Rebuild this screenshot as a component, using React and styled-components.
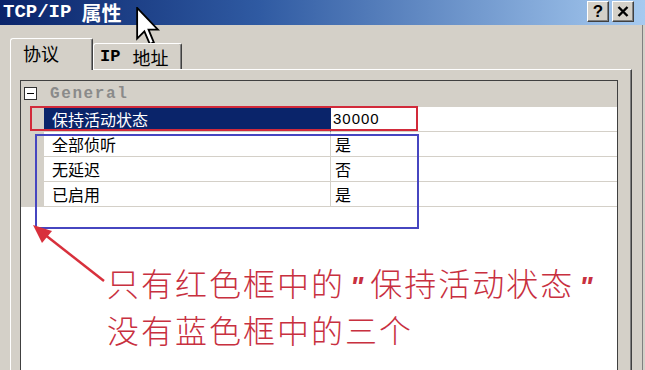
import React from 'react'
import styled, { createGlobalStyle } from 'styled-components'

const GlobalStyle = createGlobalStyle`
  html, body {
    margin: 0;
    padding: 0;
    background: #d4d0c8;
    overflow: hidden;
  }
  body {
    font-family: "Noto Sans CJK SC", "Liberation Sans", sans-serif;
  }
`

const Window = styled.div`
  position: relative;
  width: 645px;
  height: 370px;
  overflow: hidden;
  background: #d4d0c8;
  display: flex;
  flex-direction: column;
`

const TitleBar = styled.div`
  flex: none;
  height: 25px;
  display: flex;
  align-items: center;
  justify-content: space-between;
  padding: 0 11px 0 3px;
  background: linear-gradient(to right, #0a246a 0%, #2f5aa2 40%, #a6caf0 100%);
`

const Title = styled.div`
  display: flex;
  align-items: center;
  gap: 10px;
  color: #fff;
  font-weight: bold;
  font-size: 20px;
  line-height: 1;
`

const Mono = styled.span`
  font-family: "Liberation Mono", monospace;
  font-size: 19px;
`

const TitleButtons = styled.div`
  display: flex;
  gap: 3px;
  align-self: flex-start;
  margin-top: 1px;
`

const TitleButton = styled.div`
  width: 22px;
  height: 21px;
  box-sizing: border-box;
  background: #d4d0c8;
  border: 1px solid;
  border-color: #fff #404040 #404040 #fff;
  box-shadow: inset -1px -1px 0 #808080;
  display: flex;
  align-items: center;
  justify-content: center;
  font-family: "Liberation Sans", sans-serif;
  font-weight: bold;
  font-size: 17px;
  color: #000;
`

const Body = styled.div`
  flex: 1;
  min-height: 0;
  display: flex;
  flex-direction: column;
  padding: 13px 13px 0 10px;
  box-shadow: inset -2px 0 0 #d4d0c8, inset -3px 0 0 #808080;
`

const TabRow = styled.div`
  position: relative;
  z-index: 1;
  height: 31px;
  flex: none;
  display: flex;
  align-items: flex-end;
`

const Tab = styled.div`
  box-sizing: border-box;
  width: ${p => (p.$active ? '83px' : '89px')};
  height: ${p => (p.$active ? '32px' : '26px')};
  margin-bottom: ${p => (p.$active ? '-1px' : '0')};
  padding: ${p => (p.$active ? '0 0 3px 12px' : '0 0 0 6px')};
  background: #d4d0c8;
  border-top: 1px solid #fff;
  border-left: 1px solid #fff;
  border-right: 1px solid #404040;
  border-top-left-radius: 3px;
  border-top-right-radius: 2px;
  box-shadow: inset -1px 0 0 #808080;
  display: flex;
  align-items: center;
  font-size: 18px;
  color: #000;
`

const TabLatin = styled.span`
  font-family: "Liberation Mono", monospace;
  font-weight: bold;
  font-size: 17px;
  margin-right: 12px;
`

const Panel = styled.div`
  flex: 1;
  min-height: 0;
  display: flex;
  flex-direction: column;
  padding: 10px 13px 0 9px;
  border-top: 1px solid #fff;
  border-left: 1px solid #fff;
  border-right: 1px solid #404040;
  box-shadow: inset -1px 0 0 #808080;
`

const Grid = styled.div`
  flex: 1;
  display: flex;
  flex-direction: column;
  background: #fff;
  border: 1px solid #404040;
  border-bottom: none;
`

const GroupRow = styled.div`
  height: 26px;
  flex: none;
  display: flex;
  align-items: center;
  padding-left: 3px;
  background: #d4d0c8;
`

const ToggleBox = styled.div`
  position: relative;
  box-sizing: border-box;
  width: 13px;
  height: 13px;
  border: 1px solid #303030;
  background: #fff;
  margin-top: -2px;
  &::after {
    content: '';
    position: absolute;
    left: 2px;
    right: 2px;
    top: 5px;
    height: 1px;
    background: #000;
  }
`

const GroupLabel = styled.span`
  margin-left: 13px;
  font-family: "Liberation Mono", monospace;
  font-weight: bold;
  font-size: 16px;
  letter-spacing: 1.6px;
  color: #8a8a8a;
`

const PropRow = styled.div`
  flex: none;
  height: 25px;
  display: grid;
  grid-template-columns: 23px 287px 1fr;
`

const Gutter = styled.div`
  background: #d4d0c8;
`

const NameCell = styled.div`
  padding-left: 8px;
  background: ${p => (p.$selected ? '#0a246a' : '#fff')};
  color: ${p => (p.$selected ? '#fff' : '#000')};
  border-right: 1px solid ${p => (p.$selected ? '#0a246a' : '#d4d0c8')};
  border-bottom: 1px solid #d4d0c8;
  font-size: 16px;
  line-height: 24px;
  white-space: nowrap;
`

const ValueCell = styled.div`
  padding-left: ${p => (p.$number ? '2px' : '4px')};
  border-bottom: 1px solid #d4d0c8;
  font-family: ${p => (p.$number ? '"Liberation Sans", sans-serif' : 'inherit')};
  letter-spacing: ${p => (p.$number ? '1px' : '0')};
  font-size: ${p => (p.$number ? '15px' : '16px')};
  line-height: 24px;
  color: #000;
`

const Note = styled.div`
  padding: 54px 0 0 86px;
  font-size: 32px;
  font-weight: 300;
  line-height: 42px;
  letter-spacing: 2px;
  color: #c8303f;
  white-space: nowrap;
`

const Quote = styled.span`
  font-family: "Liberation Sans", sans-serif;
  font-style: italic;
  font-weight: bold;
  font-size: 28px;
  margin: 0 5px;
`

const Frame = styled.div`
  position: absolute;
  box-sizing: border-box;
  left: ${p => p.$x}px;
  top: ${p => p.$y}px;
  width: ${p => p.$w}px;
  height: ${p => p.$h}px;
  border: 2px solid ${p => p.$color};
  pointer-events: none;
`

const Overlay = styled.svg`
  position: absolute;
  left: 0;
  top: 0;
  pointer-events: none;
`

const Cursor = styled.svg`
  position: absolute;
  left: 136px;
  top: 7px;
`

const rows = [
  { name: '全部侦听', value: '是' },
  { name: '无延迟', value: '否' },
  { name: '已启用', value: '是' },
]

export default function App() {
  return (
    <Window>
      <GlobalStyle />
      <TitleBar>
        <Title>
          <Mono>TCP/IP</Mono>
          <span>属性</span>
        </Title>
        <TitleButtons>
          <TitleButton>?</TitleButton>
          <TitleButton>
            <svg width="12" height="11" viewBox="0 0 12 11">
              <path d="M1.5 1 L10.5 10 M10.5 1 L1.5 10" stroke="#000" strokeWidth="2.4" />
            </svg>
          </TitleButton>
        </TitleButtons>
      </TitleBar>

      <Body>
        <TabRow>
          <Tab $active>协议</Tab>
          <Tab>
            <TabLatin>IP</TabLatin>地址
          </Tab>
        </TabRow>
        <Panel>
          <Grid>
            <GroupRow>
              <ToggleBox />
              <GroupLabel>General</GroupLabel>
            </GroupRow>
            <PropRow>
              <Gutter />
              <NameCell $selected>保持活动状态</NameCell>
              <ValueCell $number>30000</ValueCell>
            </PropRow>
            {rows.map(r => (
              <PropRow key={r.name}>
                <Gutter />
                <NameCell>{r.name}</NameCell>
                <ValueCell>{r.value}</ValueCell>
              </PropRow>
            ))}
            <Note>
              <div>
                只有红色框中的<Quote>"</Quote>保持活动状态<Quote>"</Quote>
              </div>
              <div>没有蓝色框中的三个</div>
            </Note>
          </Grid>
        </Panel>
      </Body>

      <Frame $x={30} $y={106} $w={388} $h={25} $color="#d22a3a" />
      <Frame $x={35} $y={134} $w={384} $h={95} $color="#4646c0" />

      <Overlay width="645" height="370" viewBox="0 0 645 370">
        <line x1="104" y1="281" x2="44" y2="234" stroke="#d8303c" strokeWidth="2.5" />
        <polygon points="33,225 52,231 42,243" fill="#d8303c" />
      </Overlay>

      <Cursor width="24" height="38" viewBox="-0.5 -0.5 13 21">
        <path
          d="M0 0 L0 17 L4 13 L7 20 L9.2 19 L6.3 12 L11.5 12 Z"
          fill="#fff"
          stroke="#000"
          strokeWidth="1"
          strokeLinejoin="miter"
        />
      </Cursor>
    </Window>
  )
}
